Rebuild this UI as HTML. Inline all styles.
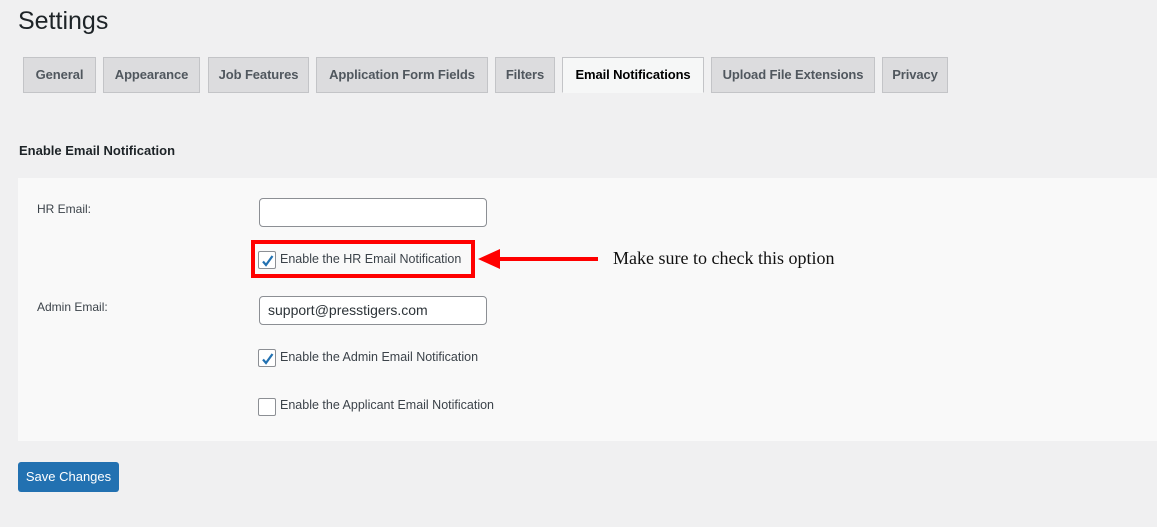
<!DOCTYPE html>
<html><head><meta charset="utf-8"><style>
*{box-sizing:border-box;margin:0;padding:0}
body{width:1157px;height:527px;background:#f0f0f1;font-family:"Liberation Sans",sans-serif;color:#3c434a;position:relative;overflow:hidden;font-size:13px}
.a{position:absolute}
h1{position:absolute;left:18px;top:7px;font-size:25px;font-weight:400;color:#1d2327}
.tab{position:absolute;top:57px;height:36px;background:#dcdcde;border:1px solid #c3c4c7;font-size:13px;font-weight:700;color:#50575e;text-align:center;line-height:34px;white-space:nowrap;letter-spacing:-0.1px}
.tab.act{background:#f6f7f7;color:#000;border-bottom-color:#f6f7f7}
.inp{position:absolute;left:259px;width:228px;height:29px;background:#fff;border:1px solid #8c8f94;border-radius:4px;font-size:14px;line-height:27px;padding-left:8px;color:#2c3338}
.cb{position:absolute;left:258px;width:18px;height:18px;background:#fff;border:1px solid #8c8f94;border-radius:2px}
.cb svg{position:absolute;left:1px;top:1px}
.lbl{position:absolute;left:280px;font-size:13px;color:#3c434a}
</style></head><body>
<h1>Settings</h1>
<div class="tab" style="left:23px;width:73px">General</div>
<div class="tab" style="left:103px;width:97px">Appearance</div>
<div class="tab" style="left:208px;width:101px">Job Features</div>
<div class="tab" style="left:316px;width:172px">Application Form Fields</div>
<div class="tab" style="left:495px;width:60px">Filters</div>
<div class="tab act" style="left:562px;width:142px">Email Notifications</div>
<div class="tab" style="left:711px;width:164px">Upload File Extensions</div>
<div class="tab" style="left:882px;width:66px">Privacy</div>
<div class="a" style="left:19px;top:143px;font-size:13px;font-weight:700;color:#1d2327">Enable Email Notification</div>
<div class="a" style="left:18px;top:178px;width:1139px;height:263px;background:#f9f9f9"></div>
<div class="a" style="left:37px;top:202px;font-size:12px">HR Email:</div>
<div class="inp" style="top:198px"></div>
<div class="a" style="left:251px;top:240px;width:224px;height:38px;border:4px solid #f00"></div>
<div class="cb" style="top:251px"><svg width="16" height="16" viewBox="0 0 16 16"><path d="M3 8.5l3 3.5 6.5-9" fill="none" stroke="#2271b1" stroke-width="2.2"/></svg></div>
<div class="lbl" style="top:252px;font-size:12.5px">Enable the HR Email Notification</div>
<svg class="a" style="left:478px;top:249px" width="122" height="20"><polygon points="0,10 22,0 22,20" fill="#f00"/><rect x="20" y="8" width="100" height="4" fill="#f00"/></svg>
<div class="a" style="left:613px;top:248px;font-family:'Liberation Serif',serif;font-size:18px;color:#111">Make sure to check this option</div>
<div class="a" style="left:37px;top:300px;font-size:12px">Admin Email:</div>
<div class="inp" style="top:296px">support@presstigers.com</div>
<div class="cb" style="top:349px"><svg width="16" height="16" viewBox="0 0 16 16"><path d="M3 8.5l3 3.5 6.5-9" fill="none" stroke="#2271b1" stroke-width="2.2"/></svg></div>
<div class="lbl" style="top:350px;font-size:12.5px">Enable the Admin Email Notification</div>
<div class="cb" style="top:398px"></div>
<div class="lbl" style="top:398px;font-size:12.5px">Enable the Applicant Email Notification</div>
<div class="a" style="left:18px;top:462px;width:101px;height:30px;background:#2271b1;border-radius:3px;color:#fff;font-size:13px;line-height:30px;text-align:center">Save Changes</div>
</body></html>
